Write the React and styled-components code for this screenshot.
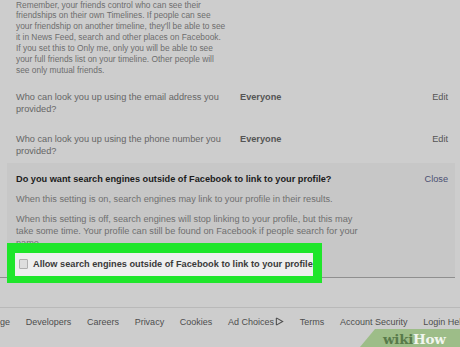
import React from "react";
import styled, { createGlobalStyle } from "styled-components";

const Global = createGlobalStyle`
  html, body {
    margin: 0;
    padding: 0;
    background: #cdcdcd;
  }
  body {
    font-family: "Liberation Sans", Arial, sans-serif;
  }
`;

const Page = styled.div`
  position: relative;
  width: 460px;
  height: 347px;
  overflow: hidden;
  background: #cdcdcd;
`;

const Intro = styled.p`
  margin: -0.5px 0 0;
  padding: 0 0 0 16px;
  font-size: 8.4px;
  line-height: 10.9px;
  color: #6e6e6e;
  white-space: nowrap;
`;

const Rows = styled.div`
  display: flex;
  flex-direction: column;
  gap: 18px;
  padding: 15px 12px 0 16px;
`;

const Row = styled.div`
  display: grid;
  grid-template-columns: 224px 1fr auto;
  font-size: 9.2px;
  line-height: 12px;
  color: #666;
`;

const Label = styled.div`
  width: 212px;
`;

const Value = styled.div`
  font-weight: bold;
  color: #555;
`;

const Edit = styled.div`
  color: #555;
`;

const Panel = styled.div`
  margin: 6px 5px 0 7px;
  background: #c7c7c7;
  padding: 10px 7px 0 9px;
  height: 104px;
`;

const PanelHead = styled.div`
  display: flex;
  justify-content: space-between;
  font-size: 9.2px;
  line-height: 12px;
`;

const Question = styled.div`
  font-weight: bold;
  color: #1c1c1c;
`;

const Close = styled.div`
  color: #4b4f72;
`;

const Note = styled.p`
  margin: 8px 0 0;
  width: ${(p) => p.$width}px;
  font-size: 9.2px;
  line-height: 12px;
  color: #6f6f6f;
`;

const Rule = styled.div`
  width: 455px;
  height: 1px;
  background: #8f8f8f;
`;

const Highlight = styled.div`
  position: relative;
  margin: -6px 0 0 -9px;
  width: 298px;
  padding: 10px 9px 7px 8px;
  background: #1fe62b;
`;

const CheckRow = styled.label`
  display: flex;
  align-items: center;
  gap: 5px;
  height: 23px;
  padding-left: 4px;
  background: #efefef;
  font-size: 9.2px;
  font-weight: bold;
  color: #3a3a3a;
  white-space: nowrap;
`;

const Box = styled.span`
  flex-shrink: 0;
  width: 7px;
  height: 8px;
  border: 1px solid #b0b0b0;
  border-radius: 1px;
  background: #dedede;
`;

const Footer = styled.div`
  margin-top: 29px;
  border-top: 1px solid #b9b9b9;
  display: flex;
  gap: 15.7px;
  padding-top: 8px;
  font-size: 9px;
  line-height: 12px;
  color: #4e4e4e;
  white-space: nowrap;
`;

const AdIcon = styled.svg`
  width: 9px;
  height: 9px;
  vertical-align: -1px;
  margin-left: 1px;
`;

const Logo = styled.div`
  position: absolute;
  right: 0;
  bottom: 0;
  width: 77px;
  height: 18px;
  padding-left: 23px;
  background: #9dbd88;
  border-top-left-radius: 6px;
  clip-path: polygon(15px 0, 100% 0, 100% 100%, 0 100%);
  font-family: "DejaVu Serif", Georgia, serif;
  font-weight: bold;
  font-size: 13.5px;
  line-height: 20px;
  letter-spacing: -0.3px;
`;

const Wiki = styled.span`
  color: #587a4a;
`;

const How = styled.span`
  color: #f2f6ef;
`;

const introLines = [
  "Remember, your friends control who can see their",
  "friendships on their own Timelines. If people can see",
  "your friendship on another timeline, they'll be able to see",
  "it in News Feed, search and other places on Facebook.",
  "If you set this to Only me, only you will be able to see",
  "your full friends list on your timeline. Other people will",
  "see only mutual friends.",
];

const links = [
  "ge",
  "Developers",
  "Careers",
  "Privacy",
  "Cookies",
  "Ad Choices",
  "Terms",
  "Account Security",
  "Login Help",
];

export default function App() {
  return (
    <Page>
      <Global />
      <Intro>
        {introLines.map((line, i) => (
          <React.Fragment key={i}>
            {line}
            {i < introLines.length - 1 && <br />}
          </React.Fragment>
        ))}
      </Intro>
      <Rows>
        <Row>
          <Label>Who can look you up using the email address you provided?</Label>
          <Value>Everyone</Value>
          <Edit>Edit</Edit>
        </Row>
        <Row>
          <Label>Who can look you up using the phone number you provided?</Label>
          <Value>Everyone</Value>
          <Edit>Edit</Edit>
        </Row>
      </Rows>
      <Panel>
        <PanelHead>
          <Question>
            Do you want search engines outside of Facebook to link to your profile?
          </Question>
          <Close>Close</Close>
        </PanelHead>
        <Note $width={360}>
          When this setting is on, search engines may link to your profile in
          their results.
        </Note>
        <Note $width={356}>
          When this setting is off, search engines will stop linking to your
          profile, but this may take some time. Your profile can still be found
          on Facebook if people search for your name.
        </Note>
        <Highlight>
          <CheckRow>
            <Box />
            Allow search engines outside of Facebook to link to your profile
          </CheckRow>
        </Highlight>
      </Panel>
      <Rule />
      <Footer>
        {links.map((l) => (
          <span key={l}>
            {l}
            {l === "Ad Choices" && (
              <AdIcon viewBox="0 0 10 10">
                <path d="M1.5 1v8M1.5 1l7 4-7 4" fill="none" stroke="#4e4e4e" strokeWidth="1.2" />
              </AdIcon>
            )}
          </span>
        ))}
      </Footer>
      <Logo>
        <Wiki>wiki</Wiki>
        <How>How</How>
      </Logo>
    </Page>
  );
}
